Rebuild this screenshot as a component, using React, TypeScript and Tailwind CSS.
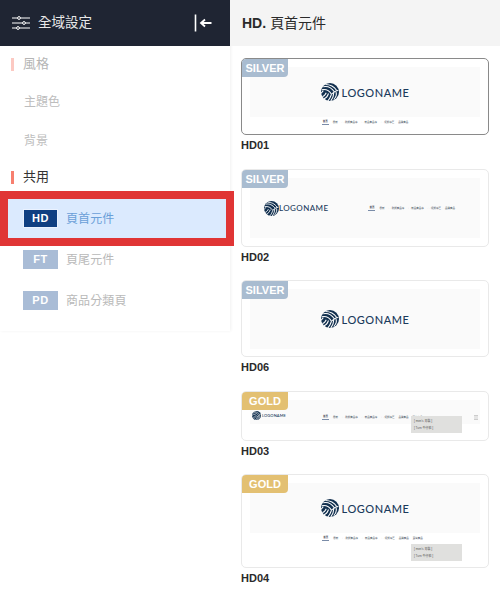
const cjk = "font-['Liberation_Sans','Noto_Sans_CJK_TC',sans-serif]";

function Ball({ size }: { size: number }) {
  return (
    <svg width={size} height={size} viewBox="0 0 24 24" className="shrink-0">
      <circle cx="12" cy="12" r="12" fill="#12304f" />
      <g fill="none" stroke="#ffffff" strokeWidth="1.4">
        <path d="M3 5c5-1 11 1 15 7" />
        <path d="M6 2c5 0 11 2 15 8" />
        <path d="M1 9c5-1 10 1 13 6" />
        <path d="M14 15c3-3 6-5 9-5" />
        <path d="M14 15c-1 3-2 6-5 9" />
        <path d="M17 13c0 4-1 7-4 11" />
        <path d="M20 12c1 3 0 7-3 10" />
        <path d="M10 14c-1 3-3 6-6 7" />
        <path d="M7 13c-1 2-3 5-5 5" />
        <path d="M3 10c-1 2-3 3-3 4" />
      </g>
    </svg>
  );
}

function Logo({ size, text, track, gap }: { size: number; text: string; track: string; gap: string }) {
  return (
    <div className={`flex items-center ${gap}`}>
      <Ball size={size} />
      <span className={`font-['Lato',sans-serif] font-medium leading-none text-[#1b3a5c] ${text} ${track}`}>LOGONAME</span>
    </div>
  );
}

function Nav({ extra = false }: { extra?: boolean }) {
  return (
    <div className={`flex items-center gap-[4px] whitespace-nowrap text-[2.5px] leading-[5px] text-[#44505c] ${cjk}`}>
      <span className="border-b border-[#7a8ca8] px-px text-[#223]">首頁</span>
      <span>最新</span>
      <span>◯ 熱銷商品專</span>
      <span>◯ 新品商品專</span>
      <span>◯ 促銷專區</span>
      <span>品牌商品</span>
      {extra && <span>賣場商品</span>}
    </div>
  );
}

function Dropdown({ top }: { top: string }) {
  return (
    <div className={`absolute left-[169px] ${top} flex h-[17px] w-[51px] flex-col justify-around bg-[#e0e0de] px-[3px] py-px text-[3px] leading-[4px] text-[#555] ${cjk}`}>
      <span>[ men's 男裝 ]</span>
      <span>[ Turn 牛仔褲 ]</span>
    </div>
  );
}

function Badge({ kind }: { kind: "SILVER" | "GOLD" }) {
  const gold = kind === "GOLD";
  return (
    <div
      className={`absolute left-0 top-0 flex h-[18px] w-[46px] items-center justify-center rounded-tl-[4px] rounded-br-[4px] font-['Liberation_Sans',sans-serif] text-[11px] font-bold text-white ${
        gold ? "bg-[#e3c072]" : "bg-[#a9bcd0]"
      }`}
    >
      {kind}
    </div>
  );
}

function Card({
  name,
  kind,
  height,
  selected,
  mb,
  children,
}: {
  name: string;
  kind: "SILVER" | "GOLD";
  height: string;
  selected?: boolean;
  mb: string;
  children: React.ReactNode;
}) {
  return (
    <section className={mb}>
      <div
        className={`relative ${height} w-[248px] rounded-[5px] border px-2 pt-2 ${
          selected ? "border-[#8a8a8a]" : "border-[#e9e9e9]"
        }`}
      >
        <Badge kind={kind} />
        {children}
      </div>
      <div className="mt-[3px] font-['Liberation_Sans',sans-serif] text-[11px] font-bold leading-[14px] text-[#2a2a2a]">{name}</div>
    </section>
  );
}

function Section({ label, active, cls }: { label: string; active?: boolean; cls: string }) {
  return (
    <div className={`flex items-center pl-[11px] ${cls}`}>
      <span className={`h-[13px] w-[3px] ${active ? "bg-[#f77f6f]" : "bg-[#fcc9c2]"}`} />
      <span className={`ml-[9px] text-[13px] ${active ? "text-[#333333]" : "text-[#b5b5b5]"}`}>{label}</span>
    </div>
  );
}

function SubItem({ label, cls }: { label: string; cls: string }) {
  return <div className={`flex items-center pl-6 text-[12px] text-[#bdbdbd] ${cls}`}>{label}</div>;
}

function CodeItem({ code, label, cls }: { code: string; label: string; cls: string }) {
  return (
    <div className={`flex h-[19px] items-center pl-[23px] ${cls}`}>
      <span className="flex h-[19px] w-[35px] items-center justify-center bg-[#a9bcd6] font-['Liberation_Sans',sans-serif] text-[11px] font-bold tracking-[0.5px] text-white">
        {code}
      </span>
      <span className="ml-2 text-[12px] tracking-[0.1px] text-[#b9b9b9]">{label}</span>
    </div>
  );
}

export default function App() {
  return (
    <div className={`flex h-[595px] w-[500px] overflow-hidden bg-white ${cjk}`}>
      <aside className="flex h-[331px] w-[230px] shrink-0 flex-col shadow-[1px_0_3px_rgba(0,0,0,0.06)]">
        <header className="flex h-[46px] shrink-0 items-center bg-[#1f2533] pl-3 pr-[18px] text-white">
          <svg width="18" height="14" viewBox="0 0 18 14" fill="none" stroke="#ffffff" strokeWidth="1">
            <path d="M0 2h18M0 7h18M0 12h18" />
            <circle cx="7" cy="2" r="1.4" fill="#1f2533" />
            <circle cx="12" cy="7" r="1.4" fill="#1f2533" />
            <circle cx="6" cy="12" r="1.4" fill="#1f2533" />
          </svg>
          <span className="ml-2 text-[13.5px] text-[#e8e8e8]">全域設定</span>
          <svg className="ml-auto" width="18" height="18" viewBox="0 0 18 18" fill="none" stroke="#ffffff">
            <path d="M1.5 0.5v17" strokeWidth="1.6" />
            <path d="M17.5 9H8" strokeWidth="2" />
            <path d="M11 5.5L7 9l4 3.5" strokeWidth="1.8" />
          </svg>
        </header>
        <Section label="風格" cls="h-[36px]" />
        <SubItem label="主題色" cls="h-[39px]" />
        <SubItem label="背景" cls="h-[39px]" />
        <Section label="共用" active cls="h-[31px] pt-[3px]" />
        <div className="relative z-10 flex h-[55px] w-[234px] shrink-0 items-center border-[8px] border-[#e03535] bg-[#dbeafe] pl-[15px]">
          <span className="flex h-[19px] w-[35px] items-center justify-center border border-[#eaf2ff] bg-[#0f3f82] font-['Liberation_Sans',sans-serif] text-[11px] font-bold tracking-[0.5px] text-white">
            HD
          </span>
          <span className="ml-2 text-[12px] tracking-[0.1px] text-[#6a9fd8]">頁首元件</span>
        </div>
        <CodeItem code="FT" label="頁尾元件" cls="mt-[4px]" />
        <CodeItem code="PD" label="商品分類頁" cls="mt-[22px]" />
      </aside>

      <main className="flex min-w-0 flex-1 flex-col">
        <header className="flex h-[46px] shrink-0 items-center bg-[#f4f4f4] pl-3 text-[14px] text-[#2a2a2a]">
          <span className="mr-1 font-bold">HD.</span>
          <span>頁首元件</span>
        </header>
        <div className="pl-[11px] pt-3">
          <Card name="HD01" kind="SILVER" height="h-[77px]" selected mb="mb-[17px]">
            <div className="flex h-[50px] items-center justify-center bg-[#fafafa]">
              <Logo size={18} text="text-[11px]" track="tracking-[0.55px]" gap="gap-[3px]" />
            </div>
            <div className="flex justify-center pt-[2px]">
              <Nav />
            </div>
          </Card>
          <Card name="HD02" kind="SILVER" height="h-[78px]" mb="mb-[16px]">
            <div className="flex h-[60px] items-center bg-[#fafafa] pl-[14px]">
              <Logo size={15} text="text-[8px]" track="tracking-[0.4px]" gap="gap-0" />
              <div className="ml-10">
                <Nav />
              </div>
            </div>
          </Card>
          <Card name="HD06" kind="SILVER" height="h-[77px]" mb="mb-[17px]">
            <div className="flex h-[60px] items-center justify-center bg-[#fafafa]">
              <Logo size={18} text="text-[11px]" track="tracking-[0.55px]" gap="gap-[3px]" />
            </div>
          </Card>
          <Card name="HD03" kind="GOLD" height="h-[50px]" mb="mb-[16px]">
            <div className="flex h-[24px] items-end bg-[#fafafa] pb-[4px] pl-[2px]">
              <Logo size={9} text="text-[4px]" track="tracking-[0.1px]" gap="gap-[1px]" />
              <div className="ml-[36px]">
                <Nav extra />
              </div>
              <span className="ml-auto mr-[2px] h-[5px] w-[4px] border-y border-[#ccc] bg-[#e4e4e4]" />
            </div>
            <Dropdown top="top-[24px]" />
          </Card>
          <Card name="HD04" kind="GOLD" height="h-[94px]" mb="mb-0">
            <div className="flex h-[50px] items-center justify-center bg-[#fafafa]">
              <Logo size={18} text="text-[11px]" track="tracking-[0.55px]" gap="gap-[3px]" />
            </div>
            <div className="flex justify-center pl-[15px] pt-[2px]">
              <Nav extra />
            </div>
            <Dropdown top="top-[69px]" />
          </Card>
        </div>
      </main>
    </div>
  );
}
